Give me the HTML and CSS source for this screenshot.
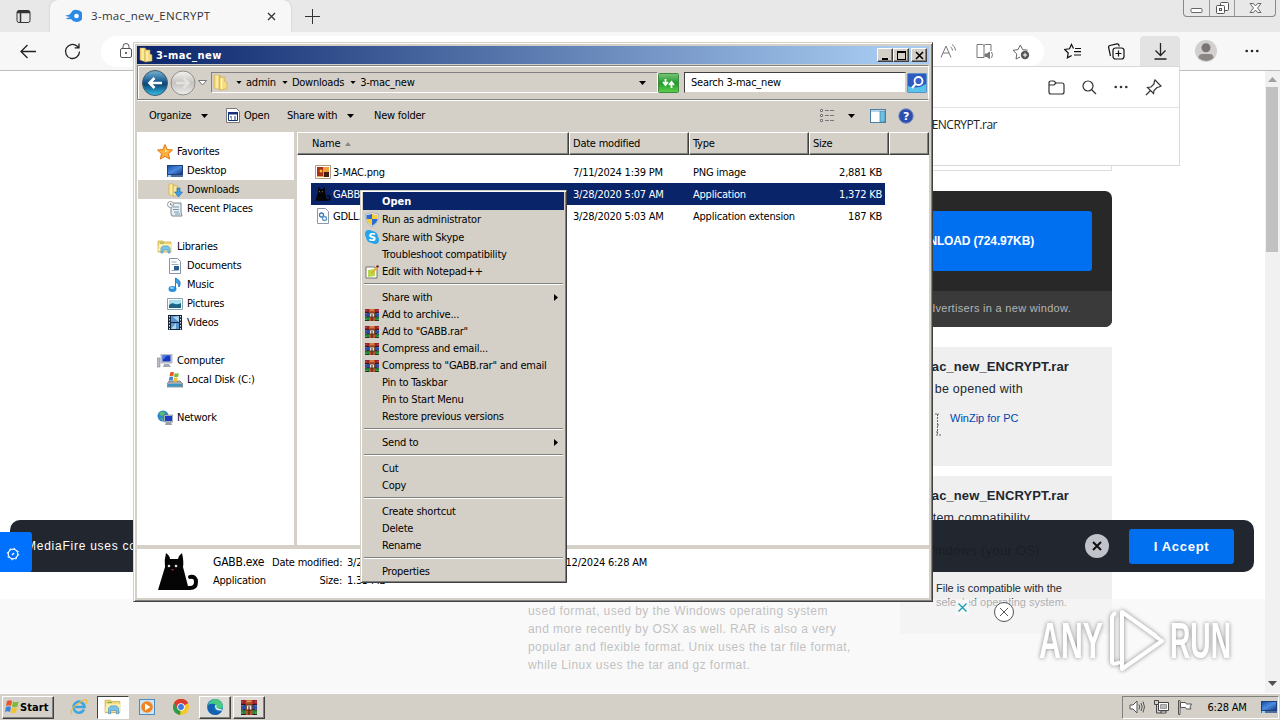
FILE: index.html
```html
<!DOCTYPE html>
<html lang="en">
<head>
  <meta charset="UTF-8">
  <meta name="viewport" content="width=device-width, initial-scale=1.0">
  <title>3-mac_new</title>
  <link rel="stylesheet" href="styles.css">
</head>
<body>
  <!-- shared icons -->
  <svg class="defs" width="0" height="0">
    <defs>
      <linearGradient id="gold" x1="0" x2="1"><stop offset="0" stop-color="#f0ce62"/><stop offset=".5" stop-color="#fff3b0"/><stop offset="1" stop-color="#d9a93c"/></linearGradient>
      <linearGradient id="screen" x1="0" y1="0" x2="1" y2="1"><stop offset="0" stop-color="#1b4fa8"/><stop offset=".5" stop-color="#4a8be0"/><stop offset="1" stop-color="#163c86"/></linearGradient>
      <linearGradient id="blue" x1="0" y1="0" x2="0" y2="1"><stop offset="0" stop-color="#7cb4d0"/><stop offset=".4" stop-color="#1f6498"/><stop offset=".55" stop-color="#0d4574"/><stop offset="1" stop-color="#35c3ee"/></linearGradient>
      <linearGradient id="silver" x1="0" y1="0" x2="0" y2="1"><stop offset="0" stop-color="#f4f4f2"/><stop offset=".5" stop-color="#c4c3c0"/><stop offset="1" stop-color="#eeeeec"/></linearGradient>
      <linearGradient id="green" x1="0" y1="0" x2="0" y2="1"><stop offset="0" stop-color="#7cc47a"/><stop offset=".5" stop-color="#1f9a2a"/><stop offset="1" stop-color="#5fd04e"/></linearGradient>
    </defs>
    <symbol id="folder" viewBox="0 0 16 16">
      <path d="M2 1h5l1 1v13l-6-2z" fill="url(#gold)" stroke="#d0a848" stroke-width=".5"/>
      <path d="M7 3h5v4l2 1v6l-7 1z" fill="#f6dc80" stroke="#c9a03c" stroke-width=".5"/>
      <path d="M9 4v10" stroke="#fff8d0"/>
    </symbol>
    <symbol id="library" viewBox="0 0 16 16">
      <path d="M1 2h5l1 1h7v10H1z" fill="#f3d77a" stroke="#c9a445" stroke-width=".7"/>
      <path d="M2 5h13l-1 7H1z" fill="#fbeeb0"/>
      <path d="M4 14V9l2-2h5l2 2v5h-2v-3H6v3z" fill="#7cc3ea" stroke="#3f8fc4" stroke-width=".6"/>
      <path d="M3 4h4" stroke="#6fae4c"/>
    </symbol>
    <symbol id="rar" viewBox="0 0 14 12" preserveAspectRatio="none">
      <path d="M0 0h14v4H0z" fill="#9c1f2c"/><path d="M0 4h14v4H0z" fill="#2a4da8"/><path d="M0 8h14v4H0z" fill="#1d8a3c"/>
      <path d="M0 3.600h14M0 7.800h14M0 11.600h14" stroke="#2a1718" stroke-width=".8"/>
      <path d="M1 1v10M13 1v10" stroke="#d8b0a0" stroke-width=".6" stroke-dasharray="1 2"/>
      <path d="M4 0h6v12H4z" fill="#b8502c"/><path d="M4.600 4h5v4h-5z" fill="#e8e4da" stroke="#3a2010" stroke-width=".7"/>
      <path d="M7 5v7" stroke="#402010"/><path d="M5 1h4" stroke="#e8b04c"/>
    </symbol>
    <symbol id="screenIcon" viewBox="0 0 16 14">
      <path d="M0 1h16v11H0z" fill="#1e3f78"/><path d="M1 2h14v8H1z" fill="url(#screen)"/>
      <path d="M0 11h16v2H0z" fill="#4c6f9c"/><path d="M1 11h3v2H1z" fill="#9fd0ee"/>
    </symbol>
    <symbol id="flag" viewBox="0 0 16 16">
      <path d="M3 2q3-1.500 5 0l-1 5q-2-1.500-5 0z" fill="#e8552a"/><path d="M9 2.500q3 1.500 5.500 0l-1 5q-3 1.500-5.500 0z" fill="#7dbb34"/>
      <path d="M2 8q3-1.500 5 0l-1 5q-3-1.500-5 0z" fill="#3d84d6"/><path d="M8 8.500q3 1.500 5 0l-1 5q-3 1.500-5 0z" fill="#f6c22c"/>
    </symbol>
    <symbol id="down" viewBox="0 0 7 4"><path d="M0 0h7L3.500 4z" fill="#000"/></symbol>
    <symbol id="dots" viewBox="0 0 14 4"><circle cx="1.700" cy="2" r="1.300"/><circle cx="7" cy="2" r="1.300"/><circle cx="12.300" cy="2" r="1.300"/></symbol>
    <symbol id="cat" viewBox="0 0 42 40">
      <path d="M9 1q4 3 4 6h8q1-4 4-6 2 9 1 14l6 23H1L8 15Q7 8 9 1z" fill="#050505"/>
      <path d="M28 36h5q6 0 6-6 0-6-6-5" fill="none" stroke="#050505" stroke-width="4" stroke-linecap="round"/>
      <circle cx="12" cy="14" r="1.300" fill="#e8dcd8"/><circle cx="19" cy="14" r="1.300" fill="#e8dcd8"/><path d="M14 17h3l-1.500 2z" fill="#a02838"/>
    </symbol>
  </svg>

  <div class="desktop">
    <div class="browser">
      <div class="tabstrip">
        <svg class="tab-actions" width="15" height="15" viewBox="0 0 15 15" fill="none" stroke="#333"><rect x="1" y="1.500" width="13" height="12" rx="2"/><path d="M1 3.500h13M4.500 4v9M1.500 2.500h12" stroke-width="1.500"/></svg>
        <div class="tab">
          <svg width="17" height="14" viewBox="0 0 17 14"><path d="M0 6Q4 7 6 4q2-4 6-3a6 6 0 0 1 0 12Q8 13 6 10 2 11 1 9q3 0 4-1Q2 8 0 6z" fill="#2b8be4"/><circle cx="11.500" cy="7" r="2.300" fill="#fff"/></svg>
          <span class="tab-title">3-mac_new_ENCRYPT</span>
          <svg width="9" height="9" viewBox="0 0 9 9" stroke="#333" stroke-width="1.300"><path d="M1 1l7 7M8 1L1 8"/></svg>
        </div>
        <svg class="new-tab" width="15" height="15" viewBox="0 0 15 15" stroke="#333"><path d="M7.500 0v15M0 7.500h15"/></svg>
        <div class="frame-buttons">
          <span><svg width="13" height="16" viewBox="0 0 13 16"><rect x="1" y="8.500" width="11" height="4" rx="1" fill="#fff" stroke="#666"/></svg></span>
          <span><svg width="13" height="16" viewBox="0 0 13 16" fill="#fff" stroke="#555"><rect x="4.500" y="2.500" width="8" height="8" rx="1"/><rect x=".5" y="5.500" width="8" height="8" rx="1"/><rect x="3.500" y="8.500" width="2" height="2"/></svg></span>
          <span><svg width="13" height="16" viewBox="0 0 13 16"><path d="M1 3.500h3.500l2 2.500 2-2.500H12L8.500 8l3.500 4.500H8.500l-2-2.500-2 2.500H1L4.500 8z" fill="#fff" stroke="#666"/></svg></span>
        </div>
      </div>

      <div class="navbar">
        <svg width="17" height="15" viewBox="0 0 17 15" fill="none" stroke="#222" stroke-width="1.300"><path d="M16 7.500H1M7.500 1L1 7.500 7.500 14"/></svg>
        <svg class="reload" width="17" height="17" viewBox="0 0 17 17" fill="none" stroke="#222" stroke-width="1.300"><path d="M15.500 8.500a7 7 0 1 1-2.500-5.400l1.500 1.400M15 .5v4.300h-4.300"/></svg>
        <div class="urlbar">
          <svg class="lock" width="13" height="16" viewBox="0 0 13 16" fill="none" stroke="#555"><rect x=".5" y="5.500" width="11" height="9" rx="1.500"/><path d="M3 5V3.500a3 3 0 0 1 6 0V5"/><circle cx="6" cy="10" r=".7" fill="#555"/></svg>
          <svg class="read" width="17" height="16" viewBox="0 0 17 16" fill="none" stroke="#777"><path d="M1 14.500L6 3l5 11.500M3 10h6M10.500 4q2 1 2 3.500M12 1.500q3.500 2 3.500 6"/></svg>
          <svg class="book" width="18" height="17" viewBox="0 0 18 17" fill="none" stroke="#777"><path d="M8 14.500H1v-13h5.500Q8 1.500 8 3v11.500M8 3q0-1.500 1.500-1.500H15V8"/><path d="M9 11h2l2.500-2v6.500L11 13.500H9z" fill="#777"/><path d="M15.500 9q2 2.500 0 6"/></svg>
          <svg width="18" height="17" viewBox="0 0 18 17" fill="none" stroke="#666"><path d="M8 14l-4 2 .8-5L1 7.300l5-.7L8.300 2l2.300 4.600 5 .6"/><circle cx="13" cy="12" r="4.200" fill="#555" stroke="none"/><path d="M10.800 12h4.400M13 9.800v4.400" stroke="#fff"/></svg>
        </div>
        <div class="nav-actions">
          <svg width="17" height="16" viewBox="0 0 17 16" fill="none" stroke="#111" stroke-width="1.200"><path d="M9.500 5.500L7.500 1.500l-2 4.300-4.800.7L4.200 10l-.8 4.800 4.300-2.300M11 5.500h6M10 8.700h7M10 12h7"/></svg>
          <svg class="collections" width="18" height="17" viewBox="0 0 18 17" fill="none" stroke="#111" stroke-width="1.200"><path d="M3.500 13L1.600 4.500Q1.300 3 2.800 2.500L10 .9q1.500-.3 1.900 1.100l.3 1.500"/><rect x="6" y="5" width="11" height="11" rx="2.500"/><path d="M11.500 7.500v6M8.500 10.500h6"/></svg>
          <div class="download-btn"><svg width="13" height="17" viewBox="0 0 13 17" fill="none" stroke="#222" stroke-width="1.300"><path d="M6.500 0v12M1.500 7.500l5 5 5-5M.5 16h12"/></svg></div>
          <svg class="avatar" width="22" height="22" viewBox="0 0 22 22"><circle cx="11" cy="11" r="11" fill="#d2d0ce"/><circle cx="11" cy="7.800" r="4.500" fill="#7a7574"/><path d="M3.500 18q0-4 4-4h7q4 0 4 4-7 6-15 0z" fill="#8a8684"/></svg>
          <svg class="more" width="14" height="4" fill="#222"><use href="#dots"/></svg>
        </div>
      </div>

      <div class="viewport">
        <div class="page">
          <div class="notice"></div>
          <div class="download-box">
            <div class="download-top"><div class="download-cta">DOWNLOAD (724.97KB)</div></div>
            <div class="download-note">Your download will open ads from our advertisers in a new window.</div>
          </div>
          <div class="columns">
            <p class="about">used format, used by the Windows operating system<br>and more recently by OSX as well. RAR is also a very<br>popular and flexible format. Unix uses the tar file format,<br>while Linux uses the tar and gz format.</p>
            <div class="cards">
              <div class="card">
                <h4>3-mac_new_ENCRYPT.rar</h4>
                <p>can be opened with</p>
                <div class="app"><svg width="9" height="25" viewBox="0 0 9 25" fill="none" stroke="#666"><path d="M3 2h4M5.500 2v20M5 13h3M4 20h3M4 23h5" stroke-dasharray="2 1"/></svg><a>WinZip for PC</a></div>
              </div>
              <div class="card tall">
                <h4>3-mac_new_ENCRYPT.rar</h4>
                <p>system compatibility</p>
                <div class="compat">File is compatible with the<br>selected operating system.</div>
              </div>
            </div>
          </div>
          <div class="ad-band"></div>
          <div class="cookie">
            <span class="cookie-text">MediaFire uses cookies</span>
            <span class="cookie-os">Windows (your OS)</span>
            <svg class="cookie-close" width="24" height="24" viewBox="0 0 24 24"><circle cx="12" cy="12" r="12" fill="#c0c3c9"/><path d="M8 8l8 8M16 8l-8 8" stroke="#111" stroke-width="2"/></svg>
            <div class="accept">I Accept</div>
          </div>
          <div class="settings"><svg width="14" height="14" viewBox="0 0 14 14" fill="none" stroke="#fff"><circle cx="7" cy="7" r="4.800" stroke-width="1.200"/><circle cx="7" cy="7" r="5.800" stroke-width="1" stroke-dasharray="1.600 2.955"/><path d="M6 8l2-2" stroke-width="1.500"/></svg></div>
          <svg class="ad-x" width="13" height="15" viewBox="0 0 13 15"><path fill="#f7f7f7" d="M0 0h13v15H0z"/><path d="M2.500 3.500l8 8M10.500 3.500l-8 8" stroke="#18a0b4" stroke-width="1.400"/></svg>
          <svg class="ad-close" width="22" height="22" viewBox="0 0 22 22"><circle cx="11" cy="11" r="9.500" fill="#fff" stroke="#555"/><path d="M7 7l8 8M15 7l-8 8" stroke="#555"/></svg>
          <svg class="watermark" width="220" height="76" viewBox="0 0 220 76">
            <g class="wm-text">
              <text x="5" y="53" textLength="64" lengthAdjust="spacingAndGlyphs">ANY</text>
              <text x="136" y="53" textLength="61" lengthAdjust="spacingAndGlyphs">RUN</text>
            </g>
            <path d="M88 7v57l40-28zM88 7l34 24M78 12v44q0 5 8 1M82 8Q78 9 78 15" fill="none" stroke="#fff" stroke-width="4" stroke-linejoin="round"/>
          </svg>
        </div>
        <div class="scrollbar">
          <svg width="9" height="5" viewBox="0 0 9 5"><path d="M4.500 0L9 5H0z" fill="#a0a0a0"/></svg>
          <div class="thumb"></div>
          <svg class="arrow-down" width="9" height="5" viewBox="0 0 9 5"><path d="M0 0h9L4.500 5z" fill="#505050"/></svg>
        </div>
      </div>

      <div class="downloads">
        <div class="downloads-head">
          <svg width="17" height="15" viewBox="0 0 17 15" fill="none" stroke="#333"><path d="M1 4V3q0-2 2-2h3l2 2h6q2 0 2 2v7q0 2-2 2H3q-2 0-2-2zM1 5h5l2-2" stroke-width="1.200"/></svg>
          <svg width="15" height="15" viewBox="0 0 15 15" fill="none" stroke="#333" stroke-width="1.200"><circle cx="6" cy="6" r="5"/><path d="M9.500 9.500L14 14"/></svg>
          <svg width="14" height="4" fill="#333"><use href="#dots"/></svg>
          <svg width="17" height="17" viewBox="0 0 17 17" fill="none" stroke="#333" stroke-width="1.200"><path d="M10 1l6 6-2 1-2 .5-3 3-.5 3L2.500 8.500 6 8l3-3 .3-2.500zM5.500 11.500L1 16"/></svg>
        </div>
        <div class="downloads-item">3-mac_new_ENCRYPT.rar</div>
      </div>
    </div>

    <!-- explorer -->
    <div class="window">
      <div class="titlebar">
        <svg width="16" height="16"><use href="#folder"/></svg>
        <b>3-mac_new</b>
        <div class="win-btn"><svg width="10" height="10"><path d="M1 7h6v2H1z"/></svg></div>
        <div class="win-btn"><svg width="10" height="10"><path d="M0 0h9v9H0zM1 2v6h7V2z" fill-rule="evenodd"/></svg></div>
        <div class="win-btn close"><svg width="10" height="10" stroke="#000" stroke-width="1.600"><path d="M1 1l7 7M8 1L1 8"/></svg></div>
      </div>

      <div class="address">
        <svg width="26" height="26" viewBox="0 0 26 26"><circle cx="13" cy="13" r="12.500" fill="url(#blue)" stroke="#41586e"/><path d="M20 13H8M12.500 8L7.500 13l5 5" fill="none" stroke="#fff" stroke-width="2.600"/></svg>
        <svg class="fwd" width="26" height="26" viewBox="0 0 26 26"><circle cx="13" cy="13" r="12" fill="url(#silver)" stroke="#8e8e8c"/><path d="M6 13h12M13.500 8l5 5-5 5" fill="none" stroke="#e4e2de" stroke-width="2.600"/></svg>
        <svg class="recent" width="9" height="6" viewBox="0 0 9 6"><path d="M.5.500h8l-4 4.500z" fill="#fff" stroke="#777"/></svg>
        <div class="path">
          <svg width="17" height="17"><use href="#folder"/></svg>
          <svg class="crumb-arrow first" width="6" height="3"><use href="#down"/></svg><span>admin</span>
          <svg class="crumb-arrow" width="6" height="3"><use href="#down"/></svg><span>Downloads</span>
          <svg class="crumb-arrow" width="6" height="3"><use href="#down"/></svg><span>3-mac_new</span>
          <svg class="path-drop" width="7" height="4"><use href="#down"/></svg>
        </div>
        <svg class="refresh" width="21" height="20" viewBox="0 0 21 20"><rect x=".5" y=".5" width="20" height="19" rx="1" fill="url(#green)" stroke="#3c8a3c"/><path d="M7.500 6v5M5 9l2.500 3L10 9M13.500 15v-5M11 12l2.500-3 2.500 3" fill="none" stroke="#fff" stroke-width="1.800"/></svg>
        <div class="search">Search 3-mac_new</div>
        <svg class="go" width="20" height="20" viewBox="0 0 20 20"><rect x=".5" y=".5" width="19" height="19" rx="1" fill="#2c5cc0" stroke="#5b8fc8"/><path d="M1 13q9 4 18-2v8H1z" fill="#58c4ea"/><circle cx="11.500" cy="8" r="4" fill="#3a60c8" stroke="#fff" stroke-width="1.800"/><path d="M8.500 11L5 15" stroke="#fff" stroke-width="2.200"/></svg>
      </div>

      <div class="toolbar">
        <span class="t-org">Organize</span><svg class="t-arrow" width="7" height="4"><use href="#down"/></svg>
        <svg class="t-app" width="14" height="15" viewBox="0 0 14 15"><path d="M.5.500h10l3 3v11H.5z" fill="#fff" stroke="#777"/><path d="M2.500 4.500h9v8h-9z" fill="#fff" stroke="#16307c"/><path d="M2 4h10v2.500H2z" fill="#16307c"/><path d="M4 9h2M8 9h2M5 11h1M8 11h2" stroke="#16307c"/></svg>
        <span class="t-open">Open</span>
        <span class="t-share">Share with</span><svg class="t-arrow" width="7" height="4"><use href="#down"/></svg>
        <span class="t-new">New folder</span>
        <svg class="t-view" width="16" height="13" viewBox="0 0 16 13" fill="none" stroke="#777"><path d="M1.500.500h2v2h-2zM1.500 5.500h2v2h-2zM1.500 10.500h2v2h-2z" fill="#eee"/><path d="M6 1.500h10M6 6.500h10M6 11.500h10" stroke-dasharray="4 1"/></svg>
        <svg class="t-viewdrop" width="7" height="4"><use href="#down"/></svg>
        <svg width="16" height="14" viewBox="0 0 16 14"><rect x=".5" y=".5" width="15" height="13" fill="#fff" stroke="#4a7fa8"/><path d="M1 1h9v2H1z" fill="#b8d4ea"/><path d="M10 2h5v11h-5z" fill="#6cc0e0" stroke="#3f7faa" stroke-width=".7"/></svg>
        <svg class="help" width="16" height="16" viewBox="0 0 16 16"><circle cx="8" cy="8" r="7.300" fill="#2c4eb0" stroke="#8494bc"/><text x="8" y="12" text-anchor="middle" class="q">?</text></svg>
      </div>

      <div class="main">
        <div class="sidebar">
          <div class="group">
            <div class="item root"><svg width="16" height="16" viewBox="0 0 16 16"><path d="M8 .5l2.200 5 5.300.5-4 3.700 1.200 5.400L8 12.300l-4.700 2.800 1.200-5.400L.5 6l5.300-.5z" fill="#fbb03c" stroke="#e07818"/><path d="M8 3l1 3.500 3 .3-4 1.200z" fill="#fff0a8"/></svg>Favorites</div>
            <div class="item"><svg width="16" height="14"><use href="#screenIcon"/></svg>Desktop</div>
            <div class="item active"><svg width="16" height="16" viewBox="0 0 16 16"><use href="#folder" width="14" height="16"/><path d="M10 6h3v4h2.500l-4 5-4-5H10z" fill="#3c9ce4" stroke="#1c6cb0" stroke-width=".6"/></svg>Downloads</div>
            <div class="item"><svg width="16" height="16" viewBox="0 0 16 16"><path d="M4 2h10v9l1 4H5l-1-2z" fill="#e8edf0" stroke="#7a8890"/><path d="M6 6h6M6 8.500h6M7 11h5M8 13h5" stroke="#6f9cb4"/><circle cx="3.500" cy="3.500" r="3" fill="#fff" stroke="#8b989e"/><path d="M3.500 2v2h2" fill="none" stroke="#555" stroke-width=".7"/></svg>Recent Places</div>
          </div>
          <div class="group">
            <div class="item root"><svg width="16" height="16"><use href="#library"/></svg>Libraries</div>
            <div class="item"><svg width="16" height="16" viewBox="0 0 16 16"><path d="M2.500.500h8l3 3v12h-11z" fill="#fff" stroke="#8494a4"/><path d="M4.500 4h5M4.500 6.500h7M4.500 12.500h7" stroke="#9ab"/><path d="M7 8h5v4H7z" fill="#2c5c94"/></svg>Documents</div>
            <div class="item"><svg width="16" height="16" viewBox="0 0 16 16"><ellipse cx="5.500" cy="12" rx="4" ry="3" fill="#2c90dc"/><path d="M8.500 12V1q4 2 4.500 4 .5 3-1 5 0-4-3.500-5" fill="#3ca0e4" stroke="#2480c8"/><ellipse cx="5" cy="11" rx="2" ry="1" fill="#90d4fa"/></svg>Music</div>
            <div class="item"><svg width="16" height="14" viewBox="0 0 16 14"><path d="M.5 1.500h15v11H.5z" fill="#fff" stroke="#8aa0b4"/><path d="M2 3h12v8H2z" fill="#a8e0f0"/><path d="M2 8q3-3 6-1 3 1 6-1v5H2z" fill="#1c6484"/></svg>Pictures</div>
            <div class="item"><svg width="16" height="15" viewBox="0 0 16 15"><path d="M1 0h14v15H1z" fill="#18243a"/><path d="M4 1h8v6H4zM4 8h8v6H4z" fill="#5a94cc"/><path d="M6 2l6 5V1zM4 14l5-6v6z" fill="#a8d4f0"/><path d="M2.500 1v14M13.500 1v14" stroke="#dde" stroke-dasharray="1.500 1.500"/></svg>Videos</div>
          </div>
          <div class="group">
            <div class="item root"><svg width="16" height="14" viewBox="0 0 16 14"><path d="M0 4h3v9H0z" fill="#b8bcc4" stroke="#80868e" stroke-width=".6"/><path d="M4 0h11v9H4z" fill="#d0d4dc" stroke="#8890a0" stroke-width=".6"/><path d="M5.500 1.300h8v6.200h-8z" fill="#1838c0"/><path d="M5.500 1.300h5l-5 5z" fill="#4a7cec"/><path d="M7 10h5l2 3H6z" fill="#a4a8b0"/></svg>Computer</div>
            <div class="item"><svg width="16" height="16" viewBox="0 0 16 16"><path d="M2 9h11l3 3v3H0v-3z" fill="#a0a8b0" stroke="#5c6874" stroke-width=".6"/><path d="M1 12h14v2.500H1z" fill="#3c98bc"/><use href="#flag" x="1" y="-1" width="12" height="12"/></svg>Local Disk (C:)</div>
          </div>
          <div class="group">
            <div class="item root"><svg width="16" height="16" viewBox="0 0 16 16"><circle cx="6" cy="6" r="5.500" fill="#2a88c8"/><path d="M2 3q4-3 6 0-1 3-4 3zM3 8q4 0 3 3z" fill="#58bc6c"/><path d="M7 5h9v7H7z" fill="#c4cad4" stroke="#6a7484" stroke-width=".6"/><path d="M8 6h7v5H8z" fill="#1a3cc4"/><path d="M9 12h5l1 3H8z" fill="#98a0ac"/></svg>Network</div>
          </div>
        </div>

        <div class="files">
          <div class="files-head">
            <div>Name <svg width="6" height="4" viewBox="0 0 6 4"><path d="M3 0l3 4H0z" fill="#888"/></svg></div><div>Date modified</div><div>Type</div><div>Size</div><div></div>
          </div>
          <div class="rows">
            <div class="row">
              <div><svg width="16" height="14" viewBox="0 0 16 14"><path d="M.5.500h15v13H.5z" fill="#fff" stroke="#b09c84"/><path d="M2 2h12v10H2z" fill="#f0a040"/><path d="M2 2h6v9H2z" fill="#a83014"/><path d="M9 7h5v5H9z" fill="#402014"/><circle cx="6" cy="6" r="1.500" fill="#f4c040"/></svg>3-MAC.png</div>
              <div>7/11/2024 1:39 PM</div><div>PNG image</div><div>2,881 KB</div>
            </div>
            <div class="row selected">
              <div><svg width="16" height="16"><use href="#cat"/></svg>GABB.exe</div>
              <div>3/28/2020 5:07 AM</div><div>Application</div><div>1,372 KB</div>
            </div>
            <div class="row">
              <div><svg width="16" height="16" viewBox="0 0 16 16"><path d="M2.500.500h8l3 3v12h-11z" fill="#fff" stroke="#8a98a8"/><circle cx="6.500" cy="7" r="2" fill="none" stroke="#3c78b4" stroke-width="1.300"/><circle cx="9.500" cy="10.500" r="2" fill="none" stroke="#5c98cc" stroke-width="1.300"/></svg>GDLL.dll</div>
              <div>3/28/2020 5:03 AM</div><div>Application extension</div><div>187 KB</div>
            </div>
          </div>
        </div>
      </div>

      <div class="details">
        <svg width="42" height="40"><use href="#cat"/></svg>
        <div class="meta">
          <div class="meta-row"><span class="m-name">GABB.exe</span><span class="m-key">Date modified:</span><span class="m-val">3/28/2020 5:07 AM</span><span class="m-created">Date created: 7/12/2024 6:28 AM</span></div>
          <div class="meta-row"><span class="m-type">Application</span><span class="m-key">Size:</span><span class="m-val">1.33 MB</span></div>
        </div>
      </div>
    </div>

    <div class="menu">
      <div class="mi big hot"><i></i><b>Open</b></div>
      <div class="mi big"><i><svg width="14" height="15" viewBox="0 0 14 15"><path d="M7 0q3 2 6.500 2Q14 11 7 15 0 11 .5 2 4 2 7 0z" fill="#e8ecf0" stroke="#8c98a4" stroke-width=".6"/><path d="M7 1.500V7H1.500V3Q5 3 7 1.500zM7 7h5.500Q12 11 7 13.700z" fill="#2c6cd0"/><path d="M7 1.500V7h5.500V3Q9 3 7 1.500zM7 7H1.500Q2 11 7 13.700z" fill="#f4cc3c"/></svg></i>Run as administrator</div>
      <div class="mi big"><i><svg width="14" height="14" viewBox="0 0 14 14"><circle cx="7" cy="7" r="6" fill="#24a4ea"/><circle cx="4" cy="4" r="4" fill="#24a4ea"/><circle cx="10" cy="10" r="4" fill="#24a4ea"/><text x="7" y="11" text-anchor="middle" class="q">S</text></svg></i>Share with Skype</div>
      <div class="mi"><i></i>Troubleshoot compatibility</div>
      <div class="mi"><i><svg width="14" height="14" viewBox="0 0 14 14"><path d="M1 2h8l3 2v9H1z" fill="#fff" stroke="#555" stroke-width=".8"/><path d="M3 5l7-1v7l-7 1z" fill="#b4d84c"/><path d="M5 8l6-6 2 1-6 6z" fill="#e8b030"/><circle cx="12.500" cy="1.500" r="1.300" fill="#802020"/></svg></i>Edit with Notepad++</div>
      <div class="sep"></div>
      <div class="mi"><i></i>Share with<svg class="sub" width="4" height="7"><path d="M0 0l4 3.500L0 7z"/></svg></div>
      <div class="mi"><i><svg width="14" height="12"><use href="#rar"/></svg></i>Add to archive...</div>
      <div class="mi"><i><svg width="14" height="12"><use href="#rar"/></svg></i>Add to "GABB.rar"</div>
      <div class="mi"><i><svg width="14" height="12"><use href="#rar"/></svg></i>Compress and email...</div>
      <div class="mi"><i><svg width="14" height="12"><use href="#rar"/></svg></i>Compress to "GABB.rar" and email</div>
      <div class="mi"><i></i>Pin to Taskbar</div>
      <div class="mi"><i></i>Pin to Start Menu</div>
      <div class="mi"><i></i>Restore previous versions</div>
      <div class="sep"></div>
      <div class="mi"><i></i>Send to<svg class="sub" width="4" height="7"><path d="M0 0l4 3.500L0 7z"/></svg></div>
      <div class="sep"></div>
      <div class="mi"><i></i>Cut</div>
      <div class="mi"><i></i>Copy</div>
      <div class="sep"></div>
      <div class="mi"><i></i>Create shortcut</div>
      <div class="mi"><i></i>Delete</div>
      <div class="mi"><i></i>Rename</div>
      <div class="sep"></div>
      <div class="mi"><i></i>Properties</div>
    </div>

    <div class="taskbar">
      <div class="start"><svg width="16" height="16"><use href="#flag"/></svg><b>Start</b></div>
      <div class="task t-ie"><svg width="18" height="18" viewBox="0 0 18 18" fill="none"><path d="M14 11.500A5.500 5.500 0 1 1 14.500 9H4.500" stroke="#3ca4e0" stroke-width="2.600"/><path d="M2 16Q-1 13 6 7q8-6 10.500-5 1 1-.5 4" stroke="#e8bc3c" stroke-width="1.200"/></svg></div>
      <div class="task pressed"><svg width="18" height="18"><use href="#library"/></svg></div>
      <div class="task t-wmp"><svg width="16" height="16" viewBox="0 0 16 16"><rect x=".5" y=".5" width="15" height="15" fill="#cfe4f4" stroke="#4c8cc0"/><circle cx="8" cy="8" r="5.800" fill="#f08420"/><path d="M6 4.500v7L11.500 8z" fill="#fff"/></svg></div>
      <div class="task t-chrome"><svg width="16" height="16" viewBox="0 0 16 16"><circle cx="8" cy="8" r="8" fill="#f8c828"/><path d="M8 8L1.100 4A8 8 0 0 1 15 4.200z" fill="#dc3c30"/><path d="M8 8L1.100 4a8 8 0 0 0 6 12z" fill="#2c9c4c"/><path d="M8 4.200h7A8 8 0 0 0 1.100 4l3.500 6z" fill="#dc3c30"/><circle cx="8" cy="8" r="3.800" fill="#fff"/><circle cx="8" cy="8" r="2.900" fill="#3c78e0"/></svg></div>
      <div class="task raised"><svg width="16" height="16" viewBox="0 0 16 16"><circle cx="8" cy="8" r="8" fill="#1c78c8"/><path d="M1 6Q3 0 9 0q6 1 7 7 0 3-4 3H9q1-4-2-5-4-1-6 1z" fill="#48c880"/><path d="M1 7q5-4 8-1-3 1-2 4 2 4 8 2-3 4-7 4-8-1-7-9z" fill="#1460b0"/><path d="M9 6q-2 5 6 5" fill="none" stroke="#fff" stroke-width="1.200"/></svg></div>
      <div class="task raised"><svg width="16" height="15"><use href="#rar"/></svg></div>
      <div class="tray">
        <svg width="16" height="14" viewBox="0 0 16 14" stroke="#555" fill="none"><path d="M1 5h3l4-4v12L4 9H1z" fill="#fff"/><path d="M10 4.500q1.500 2.500 0 5M12 3q2.500 4 0 8M14 1.500q3 5.500 0 11"/></svg>
        <svg width="16" height="16" viewBox="0 0 16 16" stroke="#444" fill="#fff"><path d="M5.500 3.500h10v8h-10z"/><path d="M7.500 5.500h6v4h-6z" fill="#bbb" stroke="#999"/><path d="M8 12h5v2H8z"/><path d="M1.500 1.500h4v4h-4zM3.500 6v8h5" fill="none"/></svg>
        <svg width="16" height="15" viewBox="0 0 16 15" stroke="#555" fill="#fff"><path d="M1.500.500h1.500v14H1.500zM3.500 2.500h5l1 1.500h5l-1.500 3 1 2H9.500l-1-1.500h-5z"/></svg>
        <span class="clock">6:28 AM</span>
        <svg width="16" height="14"><use href="#screenIcon"/></svg>
      </div>
    </div>
  </div>
</body>
</html>
```

FILE: styles.css
```css
* {
  box-sizing: border-box;
}
body {
  margin: 0;
  font-family: "DejaVu Sans Condensed", "Noto Sans", sans-serif;
  font-size: 11px;
  letter-spacing: -0.23px;
  color: #000;
}
svg {
  display: block;
  flex: none;
}
.defs {
  position: absolute;
}
.desktop {
  position: relative;
  width: 1280px;
  height: 720px;
  overflow: hidden;
  display: flex;
  flex-direction: column;
  white-space: nowrap;
}

/* browser */
.browser {
  height: 693px;
  display: flex;
  flex-direction: column;
  position: relative;
}
.tabstrip {
  height: 32px;
  background: #e8e8e8;
  display: flex;
  align-items: center;
}
.tab-actions {
  margin: 0 19px 0 16px;
}
.tab {
  width: 241px;
  height: 32px;
  background: #f7f7f7;
  border-radius: 8px 8px 0 0;
  display: flex;
  align-items: center;
  padding: 0 15px;
  box-shadow: 0 0 2px #bbb;
}
.tab-title {
  flex: 1;
  margin-left: 9px;
  padding-bottom: 2px;
  font: 11.5px "Open Sans", sans-serif;
  letter-spacing: 0.3px;
  color: #333;
}
.new-tab {
  margin-left: 14px;
}
.frame-buttons {
  margin-left: auto;
  margin-right: 4px;
  align-self: flex-start;
  height: 17px;
  width: 93px;
  display: grid;
  grid-template-columns: 25px 25px 1fr;
  border: 1px solid #888;
  border-top: 0;
  border-radius: 0 0 4px 4px;
}
.frame-buttons span {
  display: flex;
  justify-content: center;
}
.frame-buttons span + span {
  border-left: 1px solid #999;
}
.navbar {
  height: 39px;
  background: #f7f7f7;
  border-bottom: 1px solid #bcbcbc;
  display: flex;
  align-items: center;
  padding: 0 21px 0 20px;
}
.reload {
  margin: 0 20px 0 27px;
}
.urlbar {
  width: 943px;
  height: 31px;
  border-radius: 16px;
  background: #fff;
  display: flex;
  align-items: center;
  padding: 0 14px 0 19px;
}
.urlbar .read {
  margin-left: auto;
}
.urlbar .book {
  margin: 0 18px 0 19px;
}
.nav-actions {
  flex: 1;
  display: flex;
  align-items: center;
  padding-left: 20px;
}
.collections {
  margin: 0 15px 0 26px;
}
.avatar {
  margin-left: 15px;
}
.more {
  margin-left: auto;
}
.download-btn {
  width: 40px;
  height: 31px;
  border-radius: 4px 4px 0 0;
  background: #e3e3e3;
  display: flex;
  align-items: center;
  justify-content: center;
}
.viewport {
  flex: 1;
  display: flex;
  min-height: 0;
}
.page {
  flex: 1;
  position: relative;
  overflow: hidden;
  background: #fff;
  font-family: "Liberation Sans", Arial, sans-serif;
  letter-spacing: 0;
}
.notice {
  width: 584px;
  height: 100px;
  margin-left: 528px;
  border: 1px solid #ddd;
  border-top: 0;
}
.download-box {
  width: 584px;
  height: 136px;
  margin: 20px 0 20px 528px;
  border-radius: 7px;
  background: #282828;
  overflow: hidden;
}
.download-top {
  height: 100px;
  padding: 20px;
}
.download-cta {
  height: 60px;
  background: #0070f0;
  border-radius: 3px;
  color: #fff;
  font-weight: bold;
  font-size: 12px;
  line-height: 60px;
  text-align: right;
  letter-spacing: -0.15px;
  padding-right: 58px;
}
.download-note {
  height: 36px;
  line-height: 35px;
  background: #3a3a3a;
  color: #b4b4b4;
  text-align: right;
  padding-right: 41px;
  font-size: 11px;
  letter-spacing: 0.3px;
}
.columns {
  display: flex;
  align-items: flex-start;
  margin-left: 528px;
  width: 584px;
}
.about {
  width: 372px;
  margin: 255px 0 0;
  font-size: 12px;
  line-height: 18px;
  letter-spacing: 0.43px;
  color: #5c5c5c;
}
.cards {
  width: 212px;
  display: flex;
  flex-direction: column;
  gap: 10px;
}
.card {
  height: 119px;
  background: #efefef;
  padding: 11px 0 0 10px;
  color: #22272f;
}
.card.tall {
  height: 158px;
}
.card h4 {
  margin: 0;
  width: 159px;
  display: flex;
  justify-content: flex-end;
  font-size: 13px;
  line-height: 18px;
  letter-spacing: 0.1px;
}
.card p {
  margin: 4px 0 0;
  width: 113px;
  display: flex;
  justify-content: flex-end;
  font-size: 12.5px;
  line-height: 18px;
  letter-spacing: 0.25px;
}
.card.tall p {
  width: 120px;
}
.app {
  display: flex;
  margin: 14px 0 0 22px;
  gap: 9px;
  font-size: 11px;
}
.app a {
  color: #0045ad;
}
.compat {
  margin: 54px 0 0 26px;
  font-size: 11px;
  line-height: 14px;
}
.ad-band {
  position: absolute;
  left: 0;
  right: 0;
  top: 528px;
  bottom: 0;
  background: rgba(246, 246, 246, 0.65);
}
.cookie {
  position: absolute;
  left: 10px;
  top: 449px;
  width: 1244px;
  height: 52px;
  border-radius: 10px;
  background: #22272f;
  color: #fff;
  display: flex;
  align-items: center;
  padding: 0 20px 0 16px;
}
.cookie-text {
  font-size: 12px;
  letter-spacing: 0.75px;
}
.cookie-os {
  margin-left: auto;
  margin-right: 45px;
  padding-top: 8px;
  color: #1a1e25;
  font-size: 13px;
  letter-spacing: 0.3px;
}
.cookie-close {
  margin-right: 20px;
}
.accept {
  width: 105px;
  height: 35px;
  line-height: 35px;
  text-align: center;
  background: #0070f0;
  border-radius: 3px;
  font-size: 13px;
  font-weight: bold;
  letter-spacing: 0.7px;
}
.settings {
  position: absolute;
  left: 0;
  top: 461px;
  width: 32px;
  height: 40px;
  background: #0070ff;
  border-radius: 0 3px 3px 0;
  display: flex;
  align-items: center;
  padding: 3px 0 0 6px;
}
.ad-x {
  position: absolute;
  left: 956px;
  top: 529px;
}
.ad-close {
  position: absolute;
  left: 993px;
  top: 530px;
}
.watermark {
  position: absolute;
  left: 1034px;
  top: 534px;
  filter: drop-shadow(0 0 2px #888);
}
.wm-text {
  font: bold 50px "Liberation Sans", sans-serif;
  fill: #fff;
}
.scrollbar {
  width: 15px;
  background: #f1f1f1;
  display: flex;
  flex-direction: column;
  align-items: center;
  padding: 6px 1px 7px 0;
}
.thumb {
  width: 12px;
  height: 165px;
  margin: 5px 0 auto;
  background: #c1c1c1;
}
.downloads {
  position: absolute;
  right: 100px;
  top: 66px;
  width: 360px;
  height: 100px;
  background: #fff;
  border: 1px solid #d8d8d8;
}
.downloads-head {
  height: 41px;
  border-bottom: 1px solid #e2e2e2;
  display: flex;
  align-items: center;
  justify-content: flex-end;
  gap: 17px;
  padding-right: 17px;
}
.downloads-item {
  width: 176px;
  font: 12px "Open Sans", sans-serif;
  line-height: 34px;
  text-align: right;
  letter-spacing: -0.5px;
  color: #222;
}

/* explorer window */
.window {
  position: absolute;
  left: 133px;
  top: 42px;
  width: 800px;
  height: 560px;
  padding: 3px;
  background: #d4d0c8;
  border: 1px solid;
  border-color: #d4d0c8 #404040 #404040 #d4d0c8;
  box-shadow: inset 1px 1px #fff, inset -1px -1px #808080;
}
.titlebar {
  height: 18px;
  display: flex;
  align-items: center;
  padding: 0 2px 0 1px;
  background: linear-gradient(90deg, #0a246a, #a6caf0 95%);
  color: #fff;
}
.titlebar b {
  flex: 1;
  margin-left: 2px;
  letter-spacing: 0.45px;
}
.win-btn {
  width: 16px;
  height: 14px;
  padding: 2px 0 0 3px;
  background: #d4d0c8;
  border: 1px solid;
  border-color: #fff #404040 #404040 #fff;
  box-shadow: inset -1px -1px #808080;
}
.win-btn.close {
  margin-left: 2px;
}
.address {
  height: 35px;
  margin-top: 1px;
  display: flex;
  align-items: center;
  padding: 0 1px 0 4px;
  border: 1px solid #808080;
  border-right-color: #fff;
  border-bottom-color: #808080;
  box-shadow: inset 1px 1px #fff, 0 1px #fff;
}
.address .fwd {
  margin-left: 2px;
}
.recent {
  margin-left: 2px;
}
.path {
  flex: 1;
  height: 21px;
  margin-left: 4px;
  border: 1px solid;
  border-color: #808080 #fff #fff #808080;
  display: flex;
  align-items: center;
}
.crumb-arrow {
  margin: 0 4px 0 6px;
}
.crumb-arrow.first {
  margin-left: 7px;
}
.path-drop {
  margin: 0 11px 0 auto;
}
.refresh {
  margin-right: 5px;
}
.search {
  width: 222px;
  height: 21px;
  padding-left: 6px;
  line-height: 19px;
  background: #fff;
  border: 1px solid;
  border-color: #404040 #d4d0c8 #d4d0c8 #404040;
}
.go {
  margin-left: 1px;
}
.toolbar {
  height: 32px;
  display: flex;
  align-items: center;
  padding: 0 15px 1px 12px;
}
.t-org {
  width: 52px;
}
.t-arrow {
  margin-right: 18px;
}
.t-app {
  margin-right: 4px;
}
.t-open {
  width: 43px;
}
.t-share {
  width: 60px;
}
.t-new {
  margin-left: 2px;
}
.t-view {
  margin-left: auto;
}
.t-viewdrop {
  margin: 0 15px 0 13px;
}
.help {
  margin-left: 12px;
}
.q {
  font: bold 11px "DejaVu Sans", sans-serif;
  fill: #fff;
}
.main {
  height: 413px;
  display: flex;
}
.sidebar {
  width: 157px;
  padding-top: 10px;
  background: #fff;
}
.group {
  margin-bottom: 19px;
}
.item {
  height: 19px;
  display: flex;
  align-items: center;
  gap: 4px;
  margin-left: 1px;
  padding-left: 29px;
}
.item.root {
  padding-left: 19px;
}
.item.active {
  background: #d4d0c8;
}
.files {
  flex: 1;
  margin-left: 3px;
  background: #fff;
}
.files-head {
  height: 23px;
  display: grid;
  grid-template-columns: 272px 120px 120px 80px 1fr;
  background: #d4d0c8;
}
.files-head div {
  display: flex;
  align-items: center;
  gap: 5px;
  padding-left: 3px;
  border: 1px solid;
  border-color: #fff #404040 #404040 #fff;
  box-shadow: inset -1px -1px #808080;
}
.files-head div:first-child {
  padding-left: 14px;
}
.rows {
  margin: 6px 0 0 14px;
  width: 574px;
}
.row {
  height: 22px;
  display: grid;
  grid-template-columns: 258px 120px 120px 1fr;
  align-items: center;
}
.row div {
  padding-left: 4px;
}
.row div:first-child {
  display: flex;
  align-items: center;
  gap: 2px;
}
.row div:last-child {
  padding: 0 3px 0 0;
  text-align: right;
}
.selected {
  background: #0a246a;
  color: #fff;
}
.details {
  height: 49px;
  margin-top: 4px;
  padding: 3px 0 0 20px;
  background: #fff;
  display: flex;
}
.meta {
  padding: 1px 0 0 14px;
}
.meta-row {
  height: 18px;
  display: flex;
  align-items: center;
}
.m-name {
  width: 59px;
  font-size: 12px;
}
.m-type {
  width: 59px;
}
.m-key {
  width: 70px;
  text-align: right;
}
.m-val {
  margin-left: 5px;
  width: 98px;
}
.m-created {
  width: 202px;
  text-align: right;
}

/* context menu */
.menu {
  position: absolute;
  left: 360px;
  top: 190px;
  width: 207px;
  height: 393px;
  padding: 1px;
  background: #d4d0c8;
  border: 1px solid;
  border-color: #d4d0c8 #404040 #404040 #d4d0c8;
  box-shadow: inset 1px 1px #fff, inset -1px -1px #808080;
}
.mi {
  height: 17px;
  display: flex;
  align-items: center;
  padding-right: 6px;
  margin: 0 1px;
}
.mi.big {
  height: 18px;
}
.mi i {
  width: 19px;
  padding-left: 2px;
}
.mi b {
  letter-spacing: 0;
}
.hot {
  background: #0a246a;
  color: #fff;
}
.sub {
  margin-left: auto;
}
.sep {
  height: 2px;
  margin: 3px 2px 4px;
  border-top: 1px solid #808080;
  border-bottom: 1px solid #fff;
}

/* taskbar */
.taskbar {
  height: 27px;
  background: #d4d0c8;
  box-shadow: inset 0 1px #fff;
  display: flex;
  align-items: center;
  padding: 1px 1px 0 2px;
}
.start {
  width: 52px;
  height: 23px;
  display: flex;
  align-items: center;
  padding-left: 1px;
  letter-spacing: 0.1px;
  border: 1px solid;
  border-color: #fff #404040 #404040 #fff;
  box-shadow: inset -1px -1px #808080;
}
.task {
  width: 32px;
  height: 23px;
  display: flex;
  align-items: center;
  justify-content: center;
}
.t-ie {
  margin-left: 9px;
}
.pressed {
  margin-left: 2px;
  background: #fff;
  border: 1px solid;
  border-color: #404040 #fff #fff #404040;
}
.t-wmp {
  margin: 0 2px;
}
.raised {
  margin-left: 2px;
  background: #dedbd6;
  border: 1px solid;
  border-color: #fff #404040 #404040 #fff;
  box-shadow: inset -1px -1px #808080;
}
.tray {
  width: 157px;
  height: 23px;
  margin-left: auto;
  display: flex;
  align-items: center;
  gap: 8px;
  padding: 0 1px 0 6px;
  border: 1px solid;
  border-color: #808080 #fff #fff #808080;
}
.clock {
  margin: 0 auto;
}
```
